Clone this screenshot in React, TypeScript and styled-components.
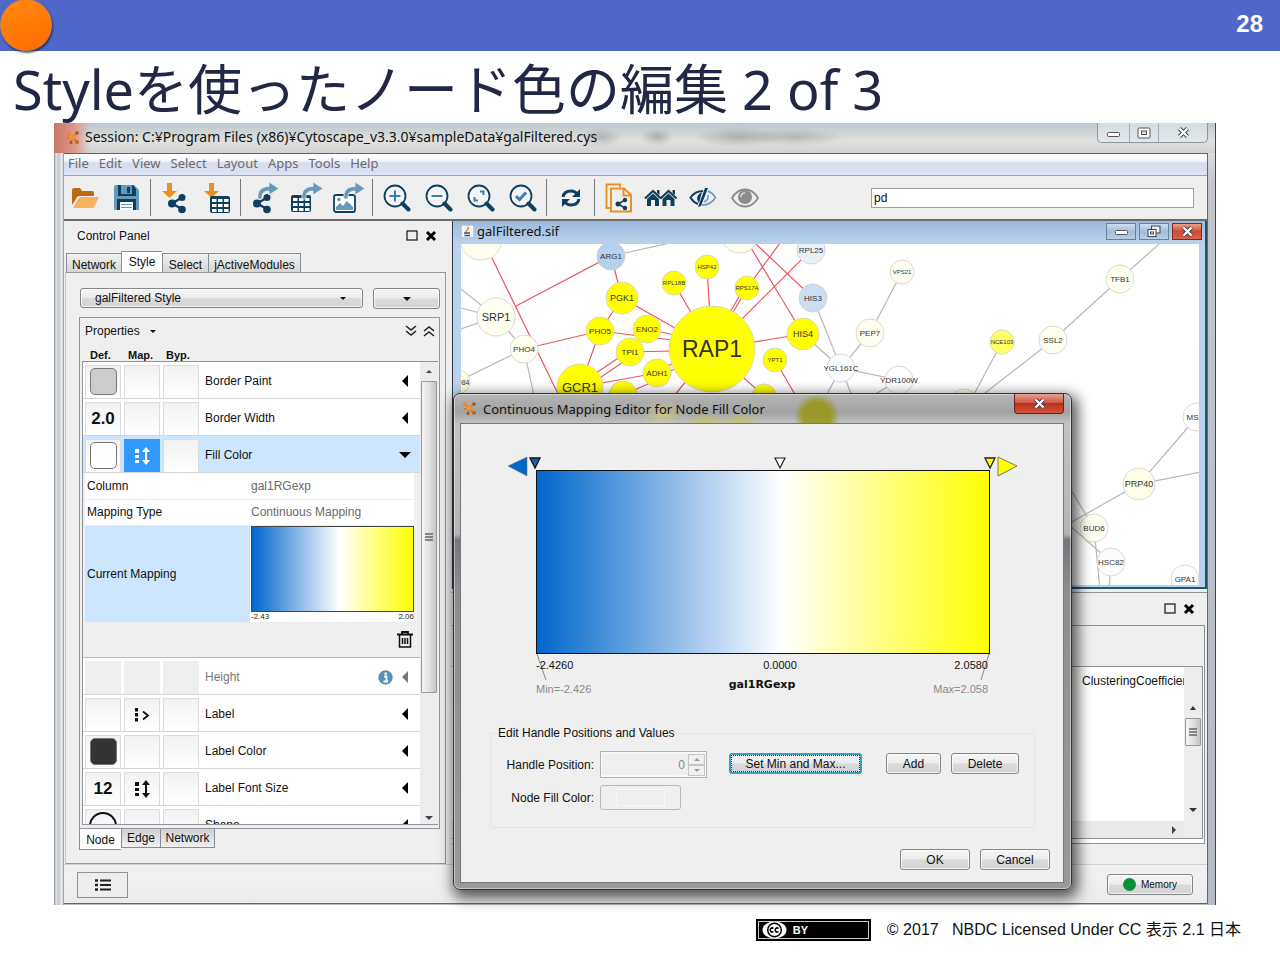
import React from "react";
import styled, { createGlobalStyle, css } from "styled-components";

const ui = `"Liberation Sans", "Noto Sans CJK JP", sans-serif`;
const title = `"Noto Sans", "Noto Sans CJK JP", sans-serif`;
const navy = "#0f3f5f";
const steel = "#6699b9";
const orange = "#ea9123";

const GlobalStyle = createGlobalStyle`
  * { box-sizing: border-box; }
  body { margin: 0; background: #fff; font-family: ${ui}; font-size: 12px; line-height: 16px; color: #111; }
  button, input, select { font: inherit; color: inherit; margin: 0; padding: 0; border-radius: 0; }
  svg { display: block; }
`;

/* ---------- slide ---------- */

const Slide = styled.div`
  display: flex;
  flex-direction: column;
`;

const Banner = styled.header`
  position: relative;
  display: flex;
  align-items: center;
  justify-content: flex-end;
  height: 51px;
  padding: 0 17px 3px 0;
  background: #4e67c8;
  color: #fff;
  font-size: 24px;
  font-weight: bold;
`;

const Disc = styled.span`
  position: absolute;
  left: 0;
  top: -1px;
  width: 52px;
  height: 52px;
  border-radius: 50%;
  border: 1px solid #cf8037;
  background: linear-gradient(160deg, #ff8a10, #ff6a00);
  box-shadow: 1px 2px 2px rgba(40, 30, 40, 0.7);
`;

const Heading = styled.h1`
  margin: 0;
  height: 72px;
  padding: 0 13px;
  font-family: "Noto Sans", "Noto Sans CJK JP", sans-serif;
  font-size: 54px;
  line-height: 76px;
  font-weight: 400;
  color: #212745;
  white-space: nowrap;
`;

const Footer = styled.footer`
  display: flex;
  align-items: center;
  justify-content: flex-end;
  gap: 16px;
  height: 50px;
  padding-right: 39px;
  font-size: 16px;
  color: #111;
  white-space: pre;
`;

const Badge = styled.span`
  display: flex;
  align-items: center;
  gap: 6px;
  width: 115px;
  height: 22px;
  padding-left: 4px;
  border: 2px solid #000;
  outline: 1px solid #ccc;
  outline-offset: -3px;
  background: #000;
  color: #fff;
  font-size: 11px;
  font-weight: bold;
`;

/* ---------- application window ---------- */

const Window = styled.section`
  position: relative;
  margin: 0 64px 0 54px;
  padding: 0 7px 1px 10px;
  border-right: 1px solid #444;
  background:
    linear-gradient(90deg, #7c848c 0, #dfe3e8 2px, #c0c5cd 5px, #f4f4f6 8px, #8a8a8a 10px, transparent 10px),
    linear-gradient(180deg, #d9dcdd 0, #d9dcdd 30px, #c4c6cc 60px, #b6bac4 100%);
`;

const TitleBar = styled.div`
  display: flex;
  align-items: center;
  height: 30px;
  margin: 0 -7px 0 -10px;
  padding: 0 11px 2px 11px;
  font-family: ${title};
  font-size: 14px;
  background:
    radial-gradient(ellipse 16px 9px at 603px 14px, rgba(90, 90, 90, 0.35), transparent),
    radial-gradient(ellipse 20px 10px at 548px 14px, rgba(90, 90, 90, 0.3), transparent),
    radial-gradient(ellipse 44px 10px at 684px 14px, rgba(90, 90, 90, 0.35), transparent),
    radial-gradient(ellipse 50px 9px at 740px 14px, rgba(110, 110, 110, 0.35), transparent),
    linear-gradient(90deg, #cb7566 0, #dd9a8b 22px, rgba(221, 154, 139, 0) 36px),
    linear-gradient(180deg, #bcc8cd, #e0e0df 60%, #d2d2d2);
`;

const TitleText = styled.span`
  flex: 1;
  padding-left: 5px;
  white-space: nowrap;
`;

const CaptionButtons = styled.div`
  align-self: flex-start;
  display: flex;
  margin-right: -4px;
  border: 1px solid #8c979f;
  border-top: 0;
  border-radius: 0 0 5px 5px;
  background: linear-gradient(180deg, #d4dde2, #e4e8ea);
  overflow: hidden;
`;

const CaptionButton = styled.button<{ $w: number }>`
  display: grid;
  place-items: center;
  width: ${(p) => p.$w}px;
  height: 19px;
  border: 0;
  border-left: 1px solid #a3adb5;
  background: transparent;
  &:first-child { border-left: 0; }
`;

const Client = styled.div`
  border: 1px solid #666;
  border-width: 1px 1px 1px 0;
  background: #efefef;
`;

const MenuBar = styled.nav`
  display: flex;
  gap: 10px;
  height: 22px;
  padding: 0 4px;
  border-bottom: 1px solid #a5a5a5;
  background: linear-gradient(180deg, #fff 0, #f6f7fb 30%, #d7dcee 45%, #dfe4f4 100%);
  font-family: ${title};
  font-size: 13px;
`;

const MenuItem = styled.button`
  height: 18px;
  border: 0;
  background: transparent;
  color: #6b6b6b;
`;

const ToolBar = styled.div`
  display: flex;
  align-items: center;
  height: 45px;
  padding-right: 13px;
  border-bottom: 2px solid #6a6a6a;
`;

const Tool = styled.button`
  display: grid;
  place-items: center;
  width: 42px;
  height: 38px;
  border: 0;
  background: transparent;
`;

const Rule = styled.span`
  width: 1px;
  height: 37px;
  margin: 0 3px 0 2px;
  background: #777;
`;

const Search = styled.input`
  width: 323px;
  height: 20px;
  margin-left: auto;
  padding: 1px 2px 0;
  border: 1px solid #a0a0a0;
  background: #fff;
`;

const Workspace = styled.div`
  display: flex;
`;

const StatusBar = styled.div`
  display: flex;
  align-items: center;
  justify-content: space-between;
  height: 39px;
  padding: 1px 14px 0 13px;
  border-top: 1px solid #d2d2d2;
  background: linear-gradient(180deg, #f2f2f2, #ebebeb);
`;

const buttonFace = css`
  border: 1px solid #83868a;
  border-radius: 3px;
  background: linear-gradient(180deg, #f4f4f4 0, #ececec 48%, #dadada 52%, #d4d4d4 100%);
  box-shadow: inset 0 0 0 1px rgba(255, 255, 255, 0.7);
`;

const PushButton = styled.button<{ $w: number; $focus?: boolean }>`
  ${buttonFace}
  display: flex;
  align-items: center;
  justify-content: center;
  gap: 5px;
  width: ${(p) => p.$w}px;
  height: 21px;
  white-space: nowrap;
  ${(p) =>
    p.$focus &&
    css`
      border: 2px solid #3f9cc4;
      outline: 1px dotted #123;
      outline-offset: -3px;
    `}
`;

const TaskButton = styled.button`
  display: grid;
  place-items: center;
  width: 51px;
  height: 26px;
  border: 1px solid #8b929e;
  background: #ededee;
`;

const Lamp = styled.span`
  width: 13px;
  height: 13px;
  border-radius: 50%;
  background: #0a9138;
`;

const SmallText = styled.span`
  font-size: 10px;
`;

/* ---------- control panel ---------- */

const ControlPanel = styled.aside`
  flex: none;
  display: flex;
  flex-direction: column;
  width: 388px;
  padding: 0 6px 0 1px;
`;

const PanelHead = styled.div`
  display: flex;
  align-items: center;
  gap: 1px;
  height: 30px;
  padding: 0 6px 0 12px;
`;

const PanelTitle = styled.h2`
  flex: 1;
  margin: 0;
  font-size: 12px;
  font-weight: 400;
`;

const BareButton = styled.button`
  display: grid;
  place-items: center;
  min-width: 18px;
  height: 18px;
  border: 0;
  background: transparent;
`;

const TopTabs = styled.div`
  display: flex;
  align-items: flex-end;
  height: 21px;
  padding-left: 1px;
`;

const Tab = styled.button<{ $w: number; $active?: boolean }>`
  width: ${(p) => p.$w}px;
  height: ${(p) => (p.$active ? 21 : 19)}px;
  padding: ${(p) => (p.$active ? "0 0 1px" : "3px 0 0")};
  border: 1px solid #8a8d93;
  border-right-width: 0;
  border-bottom-width: 0;
  background: ${(p) => (p.$active ? "#fff" : "linear-gradient(180deg, #f0f0f0, #d6d6d6)")};
  white-space: nowrap;
  &:last-child { border-right-width: 1px; }
`;

const StylePane = styled.div`
  flex: 1;
  padding: 15px 5px 13px 14px;
  border: 1px solid #9097a0;
  border-left-color: #c5c9d0;
`;

const PickerRow = styled.div`
  display: flex;
  gap: 10px;
  margin-bottom: 8px;
`;

const Picker = styled.label`
  ${buttonFace}
  display: flex;
  align-items: center;
  flex: 1;
  height: 20px;
  padding-right: 16px;
`;

const Select = styled.select`
  flex: 1;
  padding-left: 14px;
  border: 0;
  appearance: none;
  background: transparent;
`;

const PropertyBox = styled.div`
  margin-left: -1px;
  border: 1px solid #8f949b;
  padding: 0 1px 3px 2px;
`;

const PropertyHead = styled.div`
  display: flex;
  align-items: center;
  height: 26px;
  padding: 0 0 0 3px;
`;

const PropertyMenu = styled.button`
  display: flex;
  align-items: center;
  gap: 10px;
  margin-right: auto;
  border: 0;
  background: transparent;
`;

const ColumnHeads = styled.div`
  display: flex;
  height: 17px;
  padding: 3px 0 0 8px;
  font-size: 11px;
  font-weight: bold;
`;

const ColumnHead = styled.span`
  width: 38px;
`;

const ListFrame = styled.div`
  display: flex;
  height: 464px;
  border: 1px solid #8f949b;
  border-width: 1px 0 1px 1px;
  background: #fff;
  overflow: hidden;
`;

const List = styled.div`
  flex: 1;
`;

const Row = styled.div<{ $selected?: boolean }>`
  display: flex;
  align-items: center;
  gap: 3px;
  height: 37px;
  padding: 2px 6px 0 2px;
  border-bottom: 1px solid #d5d5d5;
  background: ${(p) => (p.$selected ? "#cce6ff" : "#fff")};
`;

const Cell = styled.button<{ $on?: boolean; $off?: boolean }>`
  flex: none;
  display: grid;
  place-items: center;
  width: 36px;
  height: 33px;
  border: 1px solid #dcdcdc;
  border-bottom: 0;
  background: linear-gradient(180deg, #f2f2f2, #fff);
  font-size: 17px;
  font-weight: bold;
  ${(p) => p.$on && css`background: #3399ff; border-color: #3399ff;`}
  ${(p) => p.$off && css`background: #efefef; border-color: #efefef;`}
`;

const RowName = styled.span<{ $off?: boolean }>`
  flex: 1;
  padding-left: 3px;
  color: ${(p) => (p.$off ? "#777" : "#111")};
`;

const Swatch = styled.span<{ $fill: string }>`
  width: 27px;
  height: 27px;
  border: 1px solid #777;
  border-radius: 5px;
  background: ${(p) => p.$fill};
`;

const Ring = styled.span`
  width: 28px;
  height: 28px;
  border: 2px solid #111;
  border-radius: 50%;
`;

const Details = styled.div`
  height: 185px;
  padding: 0 6px 0 2px;
  border-bottom: 1px solid #bbb;
  background: #efefef;
`;

const DetailTable = styled.table`
  width: 100%;
  border-collapse: collapse;
  background: #fff;
  th, td {
    height: 26px;
    padding: 0;
    text-align: left;
    font-weight: 400;
    border-bottom: 1px solid #ececec;
  }
  th { width: 165px; padding-left: 2px; }
  td { color: #6a6a6a; padding-left: 1px; }
`;

const MappingHead = styled.th`
  background: #cce6ff;
`;

const Ramp = styled.div`
  height: 86px;
  border: 1px solid #444;
  background: linear-gradient(90deg, #0066cc, #fff 54%, #ffff00);
`;

const RampScale = styled.div`
  display: flex;
  justify-content: space-between;
  font-size: 8px;
  line-height: 10px;
  color: #222;
`;

const TrashRow = styled.div`
  display: flex;
  justify-content: flex-end;
  padding: 8px 0 0 0;
`;

const ScrollTrack = styled.div`
  flex: none;
  display: flex;
  flex-direction: column;
  align-items: center;
  width: 18px;
  padding: 8px 0 4px;
  gap: 8px;
  background: #ececec;
`;

const Thumb = styled.span<{ $h: number }>`
  display: grid;
  place-items: center;
  width: 16px;
  height: ${(p) => p.$h}px;
  margin-bottom: auto;
  border: 1px solid #999;
  border-radius: 1px;
  background: linear-gradient(90deg, #f5f5f5, #e2e2e2 50%, #c4c4ca);
`;

const BottomTabs = styled.div`
  display: flex;
  align-items: flex-start;
  margin-left: -1px;
`;

const BottomTab = styled.button<{ $w: number; $active?: boolean }>`
  width: ${(p) => p.$w}px;
  height: ${(p) => (p.$active ? 21 : 19)}px;
  padding-top: ${(p) => (p.$active ? 2 : 0)}px;
  border: 1px solid #8a8d93;
  border-top-width: 0;
  border-right-width: 0;
  background: ${(p) => (p.$active ? "#fff" : "linear-gradient(180deg, #d0d0d0, #f0f0f0)")};
  &:last-child { border-right-width: 1px; }
`;

/* ---------- network view and table panel ---------- */

const Desktop = styled.div`
  flex: 1;
  min-width: 0;
  display: flex;
  flex-direction: column;
`;

const NetFrame = styled.section`
  padding: 0 6px 2px 8px;
  border-right: 2px solid #1f5566;
  border-bottom: 2px solid #1f5566;
  border-left: 1px solid #334;
  background: linear-gradient(180deg, #9cbadb 0, #bcd3ec 24px, #b7d2ee 100%);
`;

const NetTitle = styled.div`
  display: flex;
  align-items: center;
  gap: 3px;
  height: 23px;
  margin-right: -3px;
  padding-bottom: 3px;
  font-family: ${title};
  font-size: 13px;
`;

const NetName = styled.span`
  flex: 1;
  line-height: 14px;
`;

const NetButton = styled.button<{ $close?: boolean }>`
  display: grid;
  place-items: center;
  width: 30px;
  height: 17px;
  border: 1px solid ${(p) => (p.$close ? "#7a2a22" : "#6c8096")};
  background: ${(p) =>
    p.$close
      ? "linear-gradient(180deg, #e7a090, #cf4a35 50%, #d8624c)"
      : "linear-gradient(180deg, #cddff1, #a4bdd8 50%, #b6cde6)"};
`;

const Graph = styled.svg`
  width: 100%;
  height: 341px;
  background: #fff;
`;

const TablePanel = styled.section`
  flex: 1;
  display: flex;
  flex-direction: column;
  margin-top: 3px;
  border-top: 1px solid #8d9198;
`;

const TableHead = styled.div`
  display: flex;
  align-items: center;
  justify-content: flex-end;
  gap: 1px;
  height: 32px;
  padding-right: 9px;
`;

const TablePane = styled.div`
  flex: 1;
  display: flex;
  flex-direction: column;
  margin: 0 2px 20px 0;
  padding-bottom: 4px;
  border: 1px solid #8d9198;
  border-left: 0;
  background: #fff;
`;

const TableTools = styled.div`
  height: 40px;
  background: #efefef;
`;

const TableBody = styled.div`
  flex: 1;
  display: flex;
  margin-right: 1px;
  border: 1px solid #8d9198;
  border-left: 0;
`;

const TableScroll = styled.div`
  flex: 1;
  min-width: 0;
  display: flex;
  flex-direction: column;
  background: #fff;
  overflow: hidden;
`;

const DataTable = styled.table`
  margin-left: auto;
  width: 102px;
  table-layout: fixed;
  border-collapse: collapse;
  th {
    padding: 6px 0 0;
    font-weight: 400;
    text-align: left;
    white-space: nowrap;
    overflow: hidden;
  }
`;

const HTrack = styled.div`
  display: flex;
  align-items: center;
  justify-content: flex-end;
  height: 17px;
  margin-top: auto;
  padding-right: 8px;
  background: #e9e9e9;
`;

/* ---------- mapping dialog ---------- */

const Dialog = styled.section`
  position: absolute;
  left: 399px;
  top: 270px;
  width: 619px;
  padding: 0 7px 6px 6px;
  border: 1px solid #333;
  border-radius: 7px;
  background:
    radial-gradient(circle 23px at 363px 22px, rgba(150, 150, 20, 0.85) 60%, transparent),
    radial-gradient(ellipse 22px 14px at 208px 20px, rgba(215, 215, 120, 0.6), transparent),
    radial-gradient(ellipse 20px 10px at 252px 28px, rgba(190, 190, 90, 0.8), transparent),
    radial-gradient(ellipse 20px 10px at 286px 28px, rgba(190, 190, 90, 0.8), transparent),
    linear-gradient(180deg, #b5b5b5 0, #a2a2a2 18px, #c3c3c3 30px, #b4b4b4 140px, #76777c 146px, #8e8e92 200px, #9a9a9a 100%);
  box-shadow: inset 0 0 0 1px rgba(255, 255, 255, 0.45), 3px 5px 14px 3px rgba(0, 0, 0, 0.65);
`;

const DialogTitle = styled.div`
  display: flex;
  align-items: center;
  height: 29px;
  padding-left: 2px;
  font-family: ${title};
  font-size: 13px;
`;

const DialogName = styled.span`
  flex: 1;
  padding-left: 6px;
`;

const DialogClose = styled.button`
  align-self: flex-start;
  display: grid;
  place-items: center;
  width: 50px;
  height: 20px;
  border: 1px solid #6b1f17;
  border-top: 0;
  border-radius: 0 0 4px 4px;
  background: linear-gradient(180deg, #e3a093, #cf5b48 45%, #b9301c 50%, #d4543d);
`;

const DialogBody = styled.div`
  padding: 24px 13px 12px 29px;
  border: 1px solid #777;
  background: #efefef;
`;

const EditBox = styled.fieldset`
  display: flex;
  align-items: flex-start;
  height: 103px;
  margin: 32px 15px 21px 0;
  padding: 10px 15px 0 7px;
  border: 1px solid #e2e5ea;
  border-radius: 2px;
  legend { padding: 0; }
`;

const Fields = styled.div`
  display: grid;
  grid-template-columns: 96px 107px;
  column-gap: 6px;
  row-gap: 7px;
  align-items: center;
  margin-right: auto;
  label { text-align: right; white-space: nowrap; }
`;

const Spinner = styled.span`
  display: flex;
  align-items: center;
  height: 27px;
  padding: 1px;
  border: 1px solid #b3b3b3;
  background: #f8f8f8;
`;

const SpinInput = styled.input`
  flex: 1;
  min-width: 0;
  height: 21px;
  padding-right: 3px;
  border: 0;
  background: #efefef;
  color: #888;
  text-align: right;
`;

const SpinButtons = styled.span`
  display: grid;
  grid-template-rows: 11px 11px;
  width: 17px;
`;

const SpinButton = styled.button`
  display: grid;
  place-items: center;
  border: 1px solid #c4c4c4;
  background: #f0f0f0;
`;

const ColorButton = styled.button`
  display: grid;
  place-items: center;
  width: 81px;
  height: 25px;
  border: 1px solid #b4b8be;
  border-radius: 3px;
  background: #efefef;
  span { width: 49px; height: 17px; border: 1px solid #f8f8f8; }
`;

const EditButtons = styled.div`
  display: flex;
  gap: 10px;
  padding-top: 2px;
  & > :first-child { margin-right: 14px; }
`;

const Confirm = styled.div`
  display: flex;
  justify-content: flex-end;
  gap: 10px;
`;

/* ---------- drawings ---------- */

const Svg = ({ w, h, children }: { w: number; h: number; children: React.ReactNode }) => (
  <svg width={w} height={h} viewBox={`0 0 ${w} ${h}`} fill="none" aria-hidden="true">
    {children}
  </svg>
);

const Tri = ({ dir, size = 8, color = "#111" }: { dir: "up" | "down" | "left" | "right"; size?: number; color?: string }) => {
  const s = size;
  const h = Math.round(s / 2);
  const d = {
    up: `M0 ${h}L${h} 0L${s} ${h}Z`,
    down: `M0 0H${s}L${h} ${h}Z`,
    left: `M${h} 0V${s}L0 ${h}Z`,
    right: `M0 0V${s}L${h} ${h}Z`,
  }[dir];
  const flat = dir === "up" || dir === "down";
  return (
    <Svg w={flat ? s : h} h={flat ? h : s}>
      <path d={d} fill={color} />
    </Svg>
  );
};

const CytoLogo = () => (
  <Svg w={15} h={15}>
    <path d="M2 3l5 4M7 7l5-4M7 7l5 5M2 8l5-1M7 7l-1 6" stroke="#d8741c" strokeWidth="1.6" />
    <circle cx="3" cy="3" r="2" fill="#e98a2c" />
    <circle cx="12" cy="3" r="1.8" fill="#a8521c" />
    <circle cx="7" cy="7" r="2.6" fill="#ef9334" />
    <circle cx="12" cy="12" r="2" fill="#c76420" />
    <circle cx="6" cy="12.5" r="1.5" fill="#a8521c" />
  </Svg>
);

const Share = ({ x, y }: { x: number; y: number }) => (
  <g transform={`translate(${x} ${y})`}>
    <path d="M14 3.5L4 9.500L14 15" stroke={navy} strokeWidth="2.400" />
    <circle cx="14" cy="3.500" r="3.500" fill={navy} />
    <circle cx="4" cy="9.500" r="4" fill={navy} />
    <circle cx="14" cy="15.500" r="3.800" fill={navy} />
  </g>
);

const Grid = ({ x, y }: { x: number; y: number }) => (
  <g transform={`translate(${x} ${y})`}>
    <rect width="20" height="17" rx="2" fill={navy} />
    {[2, 8, 14].map((gx) => [3, 8, 13].map((gy) => <rect key={`${gx}-${gy}`} x={gx} y={gy} width="4.500" height="3" fill="#fff" />))}
  </g>
);

const DownArrow = () => <path d="M5 1h5v8h5L7.500 16L0 9h5z" fill={orange} />;
const CurveArrow = ({ x }: { x: number }) => (
  <path
    transform={`translate(${x} 0)`}
    d="M0 17C-1 9 3 4.500 11 4.500V0L21 6.500L11 13V9C6 9 3.500 11 4 17Z"
    fill={steel}
    stroke="#efefef"
    strokeWidth="0.800"
  />
);

const Magnifier = ({ children }: { children: React.ReactNode }) => (
  <Svg w={28} h={28}>
    <circle cx="12" cy="12" r="10.500" stroke={navy} strokeWidth="1.800" fill="#f3f5f6" />
    <path d="M19.500 19.500L25.500 25.500" stroke={navy} strokeWidth="4" strokeLinecap="round" />
    <g stroke="#3e7ea6" strokeWidth="2">{children}</g>
  </Svg>
);

const tools: { name: string; icon: React.ReactNode; rule?: boolean }[] = [
  {
    name: "Open session",
    icon: (
      <Svg w={28} h={22}>
        <path d="M1 18V3Q1 1 3 1H9L11 4H21Q23 4 23 6V9H9Q6 9 5 12Z" fill="#bb6b15" />
        <path d="M2 21L7 12Q8 10 10 10H28L23 20Q22.500 21 21 21Z" fill="#f9b35f" />
      </Svg>
    ),
  },
  {
    name: "Save session",
    rule: true,
    icon: (
      <Svg w={26} h={26}>
        <path d="M0 2Q0 0 2 0H20L25 5V24Q25 25 24 25H2Q0 25 0 24Z" fill={steel} />
        <path d="M4 0H19L22 4V11H4ZM3 14H22V25H3Z" fill={navy} />
        <rect x="7" y="0" width="11" height="9" fill={steel} />
        <rect x="13" y="2" width="3" height="6" fill={navy} />
        <rect x="6" y="17" width="13" height="8" fill="#fff" />
        <path d="M7 19.500H18M7 22.500H18" stroke={steel} />
      </Svg>
    ),
  },
  { name: "Import network", icon: <Svg w={26} h={32}><DownArrow /><Share x={6} y={12} /></Svg> },
  { name: "Import table", rule: true, icon: <Svg w={26} h={32}><DownArrow /><Grid x={6} y={14} /></Svg> },
  { name: "Export network", icon: <Svg w={27} h={32}><Share x={1} y={12} /><CurveArrow x={6} /></Svg> },
  { name: "Export table", icon: <Svg w={32} h={32}><Grid x={0} y={13} /><CurveArrow x={11} /></Svg> },
  {
    name: "Export image",
    rule: true,
    icon: (
      <Svg w={32} h={32}>
        <rect x="1" y="13" width="21" height="17" rx="2" stroke={navy} strokeWidth="1.800" fill="#fff" />
        <path d="M3 28V25L7 21L10 24L14 19L20 25V28Z" fill={steel} />
        <circle cx="6" cy="17.500" r="1.800" fill={steel} />
        <CurveArrow x={11} />
      </Svg>
    ),
  },
  { name: "Zoom in", icon: <Magnifier><path d="M12 6.500V17.500M6.500 12H17.500" /></Magnifier> },
  { name: "Zoom out", icon: <Magnifier><path d="M6.500 12H17.500" /></Magnifier> },
  { name: "Fit content", icon: <Magnifier><path d="M13 7.500H16.500V11M11 16.500H7.500V13" /></Magnifier> },
  { name: "Zoom selected", rule: true, icon: <Magnifier><path d="M7 12L10.500 15.500L17 8.500" strokeWidth="3" /></Magnifier> },
  {
    name: "Apply layout",
    rule: true,
    icon: (
      <Svg w={22} h={20}>
        <path d="M3 9Q4 3 11 3Q15 3 17 6M19 11Q18 17 11 17Q7 17 5 14" stroke={navy} strokeWidth="3" />
        <path d="M20 1V9H12ZM2 19V11H10Z" fill={navy} />
      </Svg>
    ),
  },
  {
    name: "New network from selection",
    icon: (
      <Svg w={28} h={30}>
        <path d="M6 25H1.500V1.500H15V4M6 5.500H19L26 12V28.500H6ZM18.500 5.500V12.500H26" stroke={orange} strokeWidth="2" />
        <path d="M20 17L13 21L20 25" stroke={navy} strokeWidth="1.500" />
        <circle cx="20" cy="17" r="2.200" fill={navy} />
        <circle cx="13" cy="21" r="2.500" fill={navy} />
        <circle cx="20" cy="25" r="2.200" fill={navy} />
      </Svg>
    ),
  },
  {
    name: "First neighbours",
    icon: (
      <Svg w={34} h={18}>
        {[0, 15.5].map((x) => (
          <g key={x} transform={`translate(${x} 0)`}>
            <path d="M1 9.500L9 2L17 9.500" stroke={navy} strokeWidth="2.200" />
            <path d="M13 1H15.500V6L13 4ZM3 10L9 4.500L15 10V17H11V11H7V17H3Z" fill={navy} />
          </g>
        ))}
      </Svg>
    ),
  },
  {
    name: "Hide selected",
    icon: (
      <Svg w={28} h={22}>
        <path d="M14 4Q6 4 1.500 10.500Q4 15 9 17" stroke={navy} strokeWidth="2" />
        <path d="M16 1L9 20L12 19L19 1ZM13 5Q5 9 10 16Z" fill={navy} />
        <path d="M19 4Q24 6 26.500 10.500Q22 18 13 18M19 8Q20 13 15 15" stroke={steel} strokeWidth="1.500" />
      </Svg>
    ),
  },
  {
    name: "Show all",
    icon: (
      <Svg w={28} h={20}>
        <path d="M1 10Q6 1.500 14 1.500Q22 1.500 27 10Q22 18.500 14 18.500Q6 18.500 1 10Z" stroke="#8c8c8c" strokeWidth="1.800" />
        <circle cx="14" cy="9" r="7" fill="#8c8c8c" />
        <path d="M10 9Q10 5 14 5" stroke="#ddd" strokeWidth="1.500" />
      </Svg>
    ),
  },
];

const Restore = () => <Svg w={12} h={12}><rect x="1" y="1" width="10" height="9" stroke="#222" strokeWidth="1.300" /></Svg>;
const Cross = () => <Svg w={12} h={12}><path d="M2 2L10 10M10 2L2 10" stroke="#000" strokeWidth="3" /></Svg>;
const MinGlyph = () => <Svg w={13} h={10}><rect x="0.500" y="4.500" width="12" height="4" rx="1" fill="#fff" stroke="#555" /></Svg>;
const MaxGlyph = () => (
  <Svg w={14} h={12}>
    <rect x="1" y="1" width="12" height="10" rx="1" fill="#fff" stroke="#555" />
    <rect x="4.500" y="4" width="5" height="3.500" fill="#ddd" stroke="#555" />
  </Svg>
);
const TileGlyph = () => (
  <Svg w={14} h={13}>
    <rect x="4.500" y="1" width="8.500" height="7" fill="#e8eef5" stroke="#445" />
    <rect x="1" y="4.500" width="8" height="7" fill="#fff" stroke="#445" />
    <rect x="3.500" y="7" width="3" height="2" stroke="#445" />
  </Svg>
);
const CloseGlyph = () => (
  <Svg w={13} h={11}>
    <path d="M2.500 1.500L10.500 9.500M10.500 1.500L2.500 9.500" stroke="#444" strokeWidth="4.200" />
    <path d="M2.500 1.500L10.500 9.500M10.500 1.500L2.500 9.500" stroke="#fff" strokeWidth="2.200" />
  </Svg>
);
const Chevrons = ({ up }: { up?: boolean }) => (
  <Svg w={12} h={12}>
    <path d={up ? "M1 6L6 2L11 6M1 11L6 7L11 11" : "M1 1L6 5L11 1M1 6L6 10L11 6"} stroke="#222" strokeWidth="1.600" />
  </Svg>
);
const Continuous = ({ color = "#111" }: { color?: string }) => (
  <Svg w={16} h={18}>
    <path d="M1 2h4v4H1zM1 8h4v3H1zM1 13h4v3H1z" fill={color} />
    <path d="M12 4V14" stroke={color} strokeWidth="2" />
    <path d="M8 5L12 0L16 5ZM8 13L12 18L16 13Z" fill={color} />
  </Svg>
);
const Passthrough = () => (
  <Svg w={16} h={14}>
    <path d="M1 0h3v3.500H1zM1 5h3v3.500H1zM1 10h3v3.500H1z" fill="#111" />
    <path d="M9 3.500L14 7.500L9 11.500" stroke="#111" strokeWidth="1.800" />
  </Svg>
);
const Info = () => (
  <Svg w={15} h={15}>
    <circle cx="7.500" cy="7.500" r="7.200" fill="#5393b4" />
    <path d="M6 6.500H8.500V11.500M5.500 11.500H10" stroke="#fff" strokeWidth="1.800" />
    <rect x="6.500" y="2.500" width="2.400" height="2.200" fill="#fff" />
  </Svg>
);
const Trash = () => (
  <Svg w={16} h={17}>
    <path d="M0 3.500H16M5 3V1H11V3" stroke="#111" strokeWidth="1.800" />
    <path d="M2.500 4V16H13.500V4M5.500 7V13M8 7V13M10.500 7V13" stroke="#111" strokeWidth="1.500" />
  </Svg>
);
const ListGlyph = () => (
  <Svg w={16} h={12}>
    <path d="M5 1.500H16M5 6H16M5 10.500H16" stroke="#222" strokeWidth="2" />
    <path d="M0 1.500H3M0 6H3M0 10.500H3" stroke="#222" strokeWidth="2.400" />
  </Svg>
);
const Grip = () => <Svg w={8} h={9}><path d="M0 1H8M0 4H8M0 7H8" stroke="#666" strokeWidth="1.400" /></Svg>;
const JavaCup = () => (
  <Svg w={13} h={13}>
    <rect width="13" height="13" rx="1" fill="#f4f6f8" stroke="#8fa3b7" />
    <path d="M6 2Q9 3 6 5Q4 6 6 8" stroke="#d9662b" strokeWidth="1.200" />
    <path d="M3 8H9M3.500 10.500H9" stroke="#33566f" strokeWidth="1.400" />
  </Svg>
);
const CcMark = () => (
  <Svg w={25} h={18}>
    <ellipse cx="12.500" cy="9" rx="12" ry="8.500" fill="#fff" />
    <circle cx="12.500" cy="9" r="6.800" stroke="#000" strokeWidth="1.500" />
    <path d="M11.500 7.500A2 2 0 1 0 11.500 10.500M16.500 7.500A2 2 0 1 0 16.500 10.500" stroke="#000" strokeWidth="1.500" />
  </Svg>
);

/* ---------- network data ---------- */

const Y = "#ffff00";
const C = "#fffff0";

type GraphNode = { x: number; y: number; r: number; fill: string; label?: string; size?: number };
const nodes: GraphNode[] = [
  { x: 481, y: 239, r: 21, fill: C },
  { x: 740, y: 234, r: 19, fill: C },
  { x: 611, y: 256, r: 14, fill: "#b4d1f0", label: "ARG1", size: 8 },
  { x: 496, y: 317, r: 19, fill: C, label: "SRP1", size: 11 },
  { x: 524, y: 349, r: 14, fill: C, label: "PHO4", size: 8 },
  { x: 458, y: 382, r: 12, fill: "#ffffd8", label: "PHO84", size: 7 },
  { x: 712, y: 349, r: 43, fill: Y, label: "RAP1", size: 23 },
  { x: 622, y: 298, r: 16, fill: Y, label: "PGK1", size: 9 },
  { x: 600, y: 331, r: 14, fill: Y, label: "PHO5", size: 8 },
  { x: 647, y: 329, r: 14, fill: Y, label: "ENO2", size: 8 },
  { x: 630, y: 352, r: 14, fill: Y, label: "TPI1", size: 8 },
  { x: 657, y: 373, r: 14, fill: Y, label: "ADH1", size: 8 },
  { x: 580, y: 387, r: 23, fill: Y, label: "GCR1", size: 13 },
  { x: 623, y: 395, r: 14, fill: Y },
  { x: 764, y: 396, r: 12, fill: Y },
  { x: 674, y: 283, r: 12, fill: Y, label: "RPL18B", size: 6 },
  { x: 707, y: 267, r: 12, fill: Y, label: "HSP42", size: 6 },
  { x: 747, y: 288, r: 12, fill: Y, label: "RPS17A", size: 6 },
  { x: 803, y: 334, r: 16, fill: Y, label: "HIS4", size: 9 },
  { x: 775, y: 360, r: 12, fill: Y, label: "YPT1", size: 6 },
  { x: 811, y: 250, r: 14, fill: "#e8f1fa", label: "RPL25", size: 8 },
  { x: 813, y: 298, r: 14, fill: "#cbdff4", label: "HIS3", size: 8 },
  { x: 841, y: 368, r: 14, fill: "#fbfcff", label: "YGL161C", size: 8 },
  { x: 870, y: 333, r: 14, fill: C, label: "PEP7", size: 8 },
  { x: 902, y: 272, r: 12, fill: C, label: "VPS21", size: 6 },
  { x: 899, y: 380, r: 14, fill: "#fff", label: "YDR100W", size: 8 },
  { x: 964, y: 402, r: 13, fill: C },
  { x: 1002, y: 342, r: 12, fill: "#ffff66", label: "NCE103", size: 6 },
  { x: 1053, y: 340, r: 14, fill: C, label: "SSL2", size: 8 },
  { x: 1120, y: 279, r: 14, fill: C, label: "TFB1", size: 8 },
  { x: 1197, y: 417, r: 14, fill: "#fff", label: "MSL5", size: 8 },
  { x: 1139, y: 484, r: 16, fill: "#ffffe6", label: "PRP40", size: 9 },
  { x: 1094, y: 528, r: 14, fill: C, label: "BUD6", size: 8 },
  { x: 1111, y: 562, r: 14, fill: "#fcfcff", label: "HSC82", size: 8 },
  { x: 1185, y: 579, r: 14, fill: "#fdfdfd", label: "GPA1", size: 8 },
];

const redEdges =
  "M492 258L560 398M516 306L611 256L622 298L600 331L580 387M622 298L712 349M524 349L600 331L712 345M647 329L712 343M630 352L712 350M630 350L580 384M632 356L582 390M657 371L712 345M659 376L712 352M580 387L657 373M623 395L657 380M712 349L674 396M674 283L712 349L707 267M747 288L712 349M744 288L709 349M712 349L811 250M747 288L780 243M756 244L813 298M751 248L803 334L712 349L764 396M775 360L797 398";
const greyEdges =
  "M611 256L670 243M461 289L496 317M461 308L496 317M461 329L496 317L524 349L461 380M524 349L534 396M813 298L841 368L803 334M902 272L870 333L841 368L899 380L872 396M841 368L826 396M841 368L852 396M1160 243L1120 279L1053 340L980 397M1002 342L972 398M1197 417L1139 484L1201 472M1139 484L1070 523M1066 482L1094 528L1100 590M1070 526L1111 562L1109 590";

const NetworkGraph = () => (
  <Graph viewBox="461 244 739 341" preserveAspectRatio="xMinYMin slice" role="img" aria-label="galFiltered network">
    <path d={greyEdges} stroke="#b9b5bd" strokeWidth="1.200" fill="none" />
    <path d={redEdges} stroke="#ea5560" strokeWidth="1.200" fill="none" />
    {nodes.map((n, i) => (
      <g key={i}>
        <circle cx={n.x} cy={n.y} r={n.r} fill={n.fill} stroke="#cfcfca" strokeWidth="0.800" />
        {n.label && (
          <text x={n.x} y={n.y} fontSize={n.size} textAnchor="middle" dominantBaseline="central" fill="#333">
            {n.label}
          </text>
        )}
      </g>
    ))}
  </Graph>
);

const MappingChart = () => (
  <svg width="530" height="245" viewBox="0 0 530 245" role="img" aria-label="Continuous mapping">
    <defs>
      <linearGradient id="ramp">
        <stop offset="0" stopColor="#0066cc" />
        <stop offset="0.540" stopColor="#fff" />
        <stop offset="1" stopColor="#ffff00" />
      </linearGradient>
    </defs>
    <path d="M37 9V28L18 18Z" fill="#0066cc" stroke="#777" strokeWidth="0.600" />
    <path d="M40 10H50L45 20Z" fill="#1762b4" stroke="#111" strokeWidth="1.300" />
    <path d="M285 10H295L290 20Z" fill="#fff" stroke="#222" strokeWidth="1.200" />
    <path d="M495 10H505L500 20Z" fill="#ffff00" stroke="#222" strokeWidth="1.300" />
    <path d="M508 9V28L527 18Z" fill="#ffff00" stroke="#777" />
    <rect x="46.500" y="22.500" width="453" height="183" fill="url(#ramp)" stroke="#111" />
    <path d="M47 206L56 232M499 206L491 232" stroke="#888" />
    <g fontSize="11" fill="#111">
      <text x="46" y="221">-2.4260</text>
      <text x="290" y="221" textAnchor="middle">0.0000</text>
      <text x="498" y="221" textAnchor="end">2.0580</text>
      <text x="272" y="240" textAnchor="middle" fontFamily="DejaVu Sans, sans-serif" fontWeight="bold">gal1RGexp</text>
    </g>
    <g fontSize="11" fill="#8a8a8a">
      <text x="46" y="245">Min=-2.426</text>
      <text x="498" y="245" textAnchor="end">Max=2.058</text>
    </g>
  </svg>
);

/* ---------- composition ---------- */

type Prop = { name: string; def?: React.ReactNode; map?: React.ReactNode; open?: boolean; off?: boolean };

const PropertyRow = ({ name, def, map, open, off }: Prop) => (
  <Row $selected={open}>
    <Cell $off={off} aria-label={`${name} default`}>{def}</Cell>
    <Cell $off={off} $on={open} aria-label={`${name} mapping`}>{map}</Cell>
    <Cell $off={off} aria-label={`${name} bypass`} />
    <RowName $off={off}>{name}</RowName>
    {off && <Info />}
    <BareButton aria-label={`Expand ${name}`}>
      <Tri dir={open ? "down" : "left"} size={12} color={off ? "#777" : "#000"} />
    </BareButton>
  </Row>
);

const ControlPanelView = () => (
  <ControlPanel>
    <PanelHead>
      <PanelTitle>Control Panel</PanelTitle>
      <BareButton aria-label="Float panel"><Restore /></BareButton>
      <BareButton aria-label="Close panel"><Cross /></BareButton>
    </PanelHead>
    <TopTabs>
      <Tab $w={55}>Network</Tab>
      <Tab $w={41} $active>Style</Tab>
      <Tab $w={46}>Select</Tab>
      <Tab $w={93}>jActiveModules</Tab>
    </TopTabs>
    <StylePane>
      <PickerRow>
        <Picker>
          <Select aria-label="Style" defaultValue="gal">
            <option value="gal">galFiltered Style</option>
          </Select>
          <Tri dir="down" size={6} />
        </Picker>
        <PushButton $w={67} aria-label="Style options"><Tri dir="down" /></PushButton>
      </PickerRow>
      <PropertyBox>
        <PropertyHead>
          <PropertyMenu>Properties <Tri dir="down" size={6} /></PropertyMenu>
          <BareButton aria-label="Expand all"><Chevrons /></BareButton>
          <BareButton aria-label="Collapse all"><Chevrons up /></BareButton>
        </PropertyHead>
        <ColumnHeads>
          <ColumnHead>Def.</ColumnHead>
          <ColumnHead>Map.</ColumnHead>
          <ColumnHead>Byp.</ColumnHead>
        </ColumnHeads>
        <ListFrame>
          <List>
            <PropertyRow name="Border Paint" def={<Swatch $fill="#cccccc" />} />
            <PropertyRow name="Border Width" def="2.0" />
            <PropertyRow name="Fill Color" def={<Swatch $fill="#ffffff" />} map={<Continuous color="#fff" />} open />
            <Details>
              <DetailTable>
                <tbody>
                  <tr><th scope="row">Column</th><td>gal1RGexp</td></tr>
                  <tr><th scope="row">Mapping Type</th><td>Continuous Mapping</td></tr>
                  <tr>
                    <MappingHead scope="row">Current Mapping</MappingHead>
                    <td>
                      <Ramp />
                      <RampScale><span>-2.43</span><span>2.06</span></RampScale>
                    </td>
                  </tr>
                </tbody>
              </DetailTable>
              <TrashRow><BareButton aria-label="Remove mapping"><Trash /></BareButton></TrashRow>
            </Details>
            <PropertyRow name="Height" off />
            <PropertyRow name="Label" map={<Passthrough />} />
            <PropertyRow name="Label Color" def={<Swatch $fill="#333333" />} />
            <PropertyRow name="Label Font Size" def="12" map={<Continuous />} />
            <PropertyRow name="Shape" def={<Ring />} />
          </List>
          <ScrollTrack>
            <Tri dir="up" size={6} color="#444" />
            <Thumb $h={312}><Grip /></Thumb>
            <Tri dir="down" size={8} color="#444" />
          </ScrollTrack>
        </ListFrame>
      </PropertyBox>
      <BottomTabs>
        <BottomTab $w={42} $active>Node</BottomTab>
        <BottomTab $w={39}>Edge</BottomTab>
        <BottomTab $w={55}>Network</BottomTab>
      </BottomTabs>
    </StylePane>
  </ControlPanel>
);

const DialogView = () => (
  <Dialog role="dialog" aria-label="Continuous Mapping Editor">
    <DialogTitle>
      <CytoLogo />
      <DialogName>Continuous Mapping Editor for Node Fill Color</DialogName>
      <DialogClose aria-label="Close"><CloseGlyph /></DialogClose>
    </DialogTitle>
    <DialogBody>
      <MappingChart />
      <EditBox>
        <legend>Edit Handle Positions and Values</legend>
        <Fields>
          <label htmlFor="handle">Handle Position:</label>
          <Spinner>
            <SpinInput id="handle" defaultValue="0" disabled />
            <SpinButtons>
              <SpinButton disabled aria-label="Increase"><Tri dir="up" size={6} color="#999" /></SpinButton>
              <SpinButton disabled aria-label="Decrease"><Tri dir="down" size={6} color="#999" /></SpinButton>
            </SpinButtons>
          </Spinner>
          <label htmlFor="fill">Node Fill Color:</label>
          <ColorButton id="fill" disabled><span /></ColorButton>
        </Fields>
        <EditButtons>
          <PushButton $w={133} $focus>Set Min and Max...</PushButton>
          <PushButton $w={55}>Add</PushButton>
          <PushButton $w={68}>Delete</PushButton>
        </EditButtons>
      </EditBox>
      <Confirm>
        <PushButton $w={70}>OK</PushButton>
        <PushButton $w={70}>Cancel</PushButton>
      </Confirm>
    </DialogBody>
  </Dialog>
);

export default function App() {
  return (
    <Slide>
      <GlobalStyle />
      <Banner>
        <Disc />
        28
      </Banner>
      <Heading>Styleを使ったノード色の編集 2 of 3</Heading>
      <Window>
        <TitleBar>
          <CytoLogo />
          <TitleText>Session: C:¥Program Files (x86)¥Cytoscape_v3.3.0¥sampleData¥galFiltered.cys</TitleText>
          <CaptionButtons>
            <CaptionButton $w={31} aria-label="Minimize"><MinGlyph /></CaptionButton>
            <CaptionButton $w={29} aria-label="Maximize"><MaxGlyph /></CaptionButton>
            <CaptionButton $w={49} aria-label="Close window"><CloseGlyph /></CaptionButton>
          </CaptionButtons>
        </TitleBar>
        <Client>
          <MenuBar>
            {["File", "Edit", "View", "Select", "Layout", "Apps", "Tools", "Help"].map((m) => (
              <MenuItem key={m}>{m}</MenuItem>
            ))}
          </MenuBar>
          <ToolBar>
            {tools.map((t) => (
              <React.Fragment key={t.name}>
                <Tool aria-label={t.name}>{t.icon}</Tool>
                {t.rule && <Rule />}
              </React.Fragment>
            ))}
            <Search aria-label="Search" defaultValue="pd" />
          </ToolBar>
          <Workspace>
            <ControlPanelView />
            <Desktop>
              <NetFrame>
                <NetTitle>
                  <JavaCup />
                  <NetName>galFiltered.sif</NetName>
                  <NetButton aria-label="Minimize view"><MinGlyph /></NetButton>
                  <NetButton aria-label="Restore view"><TileGlyph /></NetButton>
                  <NetButton $close aria-label="Close view"><CloseGlyph /></NetButton>
                </NetTitle>
                <NetworkGraph />
              </NetFrame>
              <TablePanel>
                <TableHead>
                  <BareButton aria-label="Float table"><Restore /></BareButton>
                  <BareButton aria-label="Close table"><Cross /></BareButton>
                </TableHead>
                <TablePane>
                  <TableTools />
                  <TableBody>
                    <TableScroll>
                      <DataTable>
                        <thead><tr><th scope="col">ClusteringCoefficient</th></tr></thead>
                      </DataTable>
                      <HTrack><Tri dir="right" size={8} color="#444" /></HTrack>
                    </TableScroll>
                    <ScrollTrack>
                      <Svg w={6} h={35}><path d="M0 35L3 31L6 35Z" fill="#333" /></Svg>
                      <Thumb $h={28}><Grip /></Thumb>
                      <Svg w={8} h={26}><path d="M0 0H8L4 4Z" fill="#333" /></Svg>
                    </ScrollTrack>
                  </TableBody>
                </TablePane>
              </TablePanel>
            </Desktop>
          </Workspace>
          <StatusBar>
            <TaskButton aria-label="Task history"><ListGlyph /></TaskButton>
            <PushButton $w={86}><Lamp /><SmallText>Memory</SmallText></PushButton>
          </StatusBar>
        </Client>
        <DialogView />
      </Window>
      <Footer>
        <Badge><CcMark />BY</Badge>
        <span>© 2017   NBDC Licensed Under CC 表示 2.1 日本</span>
      </Footer>
    </Slide>
  );
}
